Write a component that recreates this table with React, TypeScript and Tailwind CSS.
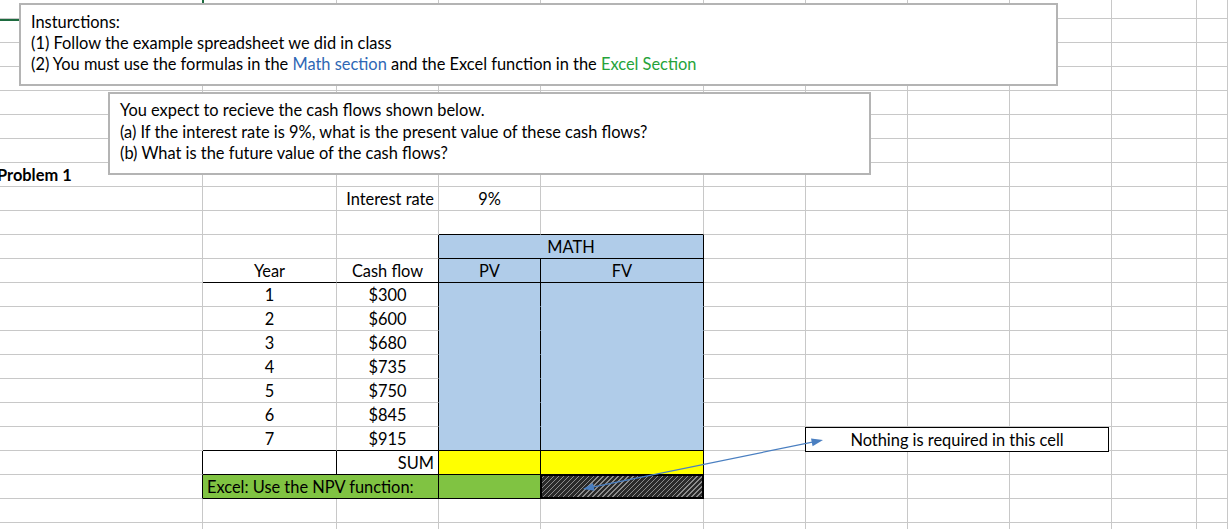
import React from 'react'

type Cell = {
  span?: number
  text?: React.ReactNode
  align?: 'l' | 'c' | 'r'
  fill?: 'blue' | 'yellow' | 'green' | 'hatch'
  r?: boolean
  b?: boolean
  bold?: boolean
}

const FILL: Record<string, string> = {
  blue: 'bg-[#b0cce9]',
  yellow: 'bg-[#ffff00]',
  green: 'bg-[#80c342]',
  hatch: 'bg-[repeating-linear-gradient(135deg,#2a2a2a_0px,#2a2a2a_2.5px,#8c8c8c_2.5px,#8c8c8c_3.5px)] shadow-[inset_0_0_0_1px_#000]',
}

const FILL_R: Record<string, string> = {
  blue: 'border-r-[#b0cce9]',
  yellow: 'border-r-[#ffff00]',
  green: 'border-r-[#80c342]',
  hatch: 'border-r-black',
}

const FILL_B: Record<string, string> = {
  blue: 'border-b-[#b0cce9]',
  yellow: 'border-b-[#ffff00]',
  green: 'border-b-[#80c342]',
  hatch: 'border-b-black',
}

const SPAN: Record<number, string> = { 1: 'col-span-1', 2: 'col-span-2' }

function makeRow(spec: Record<number, Cell>) {
  const out: (Cell & { col: number })[] = []
  let c = 0
  while (c < 11) {
    const s = spec[c] ?? {}
    out.push({ ...s, col: c })
    c += s.span ?? 1
  }
  return out
}

const years = ['$300', '$600', '$680', '$735', '$750', '$845', '$915']

const rows: Record<number, Cell>[] = [
  {}, {}, {}, {}, {}, {}, {},
  { 0: { text: 'Problem 1', bold: true, align: 'l' } },
  { 2: { text: 'Interest rate', align: 'r' }, 3: { text: '9%', align: 'c' } },
  { 3: { b: true }, 4: { b: true } },
  { 2: { r: true }, 3: { span: 2, text: 'MATH', align: 'c', fill: 'blue', r: true, b: true } },
  {
    1: { text: 'Year', align: 'c', b: true },
    2: { text: 'Cash flow', align: 'c', b: true, r: true },
    3: { text: 'PV', align: 'c', fill: 'blue', r: true, b: true },
    4: { text: 'FV', align: 'c', fill: 'blue', r: true, b: true },
  },
  ...years.map((v, i) => {
    const last = i === years.length - 1
    return {
      1: { text: String(i + 1), align: 'c', b: last },
      2: { text: v, align: 'c', r: true, b: last },
      3: { fill: 'blue', r: true, b: last },
      4: { fill: 'blue', r: true, b: last },
    } as Record<number, Cell>
  }),
  {
    0: { r: true },
    1: { r: true, b: true },
    2: { text: 'SUM', align: 'r', r: true, b: true },
    3: { fill: 'yellow', r: true, b: true },
    4: { fill: 'yellow', r: true, b: true },
  },
  {
    0: { r: true },
    1: { span: 2, text: 'Excel: Use the NPV function:', align: 'l', fill: 'green', r: true, b: true },
    3: { fill: 'green', r: true, b: true },
    4: { fill: 'hatch', r: true, b: true },
  },
  {}, {},
]

function SheetCell({ cell, first }: { cell: Cell & { col: number }; first: boolean }) {
  const right = cell.r ? 'border-r-black' : cell.fill ? FILL_R[cell.fill] : 'border-r-[#c8c8c8]'
  const bottom = cell.b ? 'border-b-black' : cell.fill ? FILL_B[cell.fill] : 'border-b-[#c8c8c8]'
  const align =
    cell.align === 'c' ? 'justify-center' : cell.align === 'r' ? 'justify-end pr-[4px]' : 'justify-start pl-[4px]'
  return (
    <div
      className={`${SPAN[cell.span ?? 1]} ${first ? 'h-[19px]' : 'h-[24px]'} flex items-center border-r border-b ${right} ${bottom} ${align} ${cell.fill ? FILL[cell.fill] : ''} ${cell.bold ? 'font-bold' : ''} ${cell.col === 0 && cell.bold ? '-ml-[7px]' : ''} overflow-visible whitespace-nowrap pt-[1px]`}
    >
      {cell.text}
    </div>
  )
}

export default function App() {
  return (
    <div className="relative w-[1228px] h-[529px] overflow-hidden bg-white text-[16.4px] text-black font-['Lato',sans-serif]">
      <div className="grid grid-cols-[203px_134px_102px_102px_163px_102px_102px_102px_102px_85px_1fr]">
        {rows.map((spec, ri) =>
          makeRow(spec).map((cell) => <SheetCell key={`${ri}-${cell.col}`} cell={cell} first={ri === 0} />)
        )}
      </div>

      {/* active cell */}
      <div className="absolute left-[-6px] top-[-10px] w-[210px] h-[31px] border-2 border-[#1d6b3f]" />

      <div className="absolute left-[19px] top-[3px] w-[1039px] h-[83px] bg-white border-2 border-[#b4b4b4] pl-[10px] pt-[6px] leading-[21px]">
        <div>Insturctions:</div>
        <div>(1) Follow the example spreadsheet we did in class</div>
        <div>
          (2) You must use the formulas in the <span className="text-[#2e67b5]">Math section</span> and the Excel
          function in the <span className="text-[#25a33a]">Excel Section</span>
        </div>
      </div>

      <div className="absolute left-[108px] top-[92px] w-[763px] h-[83px] bg-white border-2 border-[#b4b4b4] pl-[10px] pt-[5px] leading-[21.5px]">
        <div>You expect to recieve the cash flows shown below.</div>
        <div>(a) If the interest rate is 9%, what is the present value of these cash flows?</div>
        <div>(b) What is the future value of the cash flows?</div>
      </div>

      <div className="absolute left-[805px] top-[427px] w-[304px] h-[25px] bg-white border border-black flex items-center justify-center pt-[1px]">
        Nothing is required in this cell
      </div>

      <svg className="absolute inset-0 pointer-events-none" width="1228" height="529" viewBox="0 0 1228 529">
        <line x1="590" y1="487.6" x2="816" y2="441.4" stroke="#4a7fc1" strokeWidth="1.2" />
        <polygon points="823,440 812.6,446.2 811,438.4" fill="#4a7fc1" />
        <polygon points="583,489 594.6,490.7 593,482.9" fill="#4a7fc1" />
      </svg>
    </div>
  )
}
